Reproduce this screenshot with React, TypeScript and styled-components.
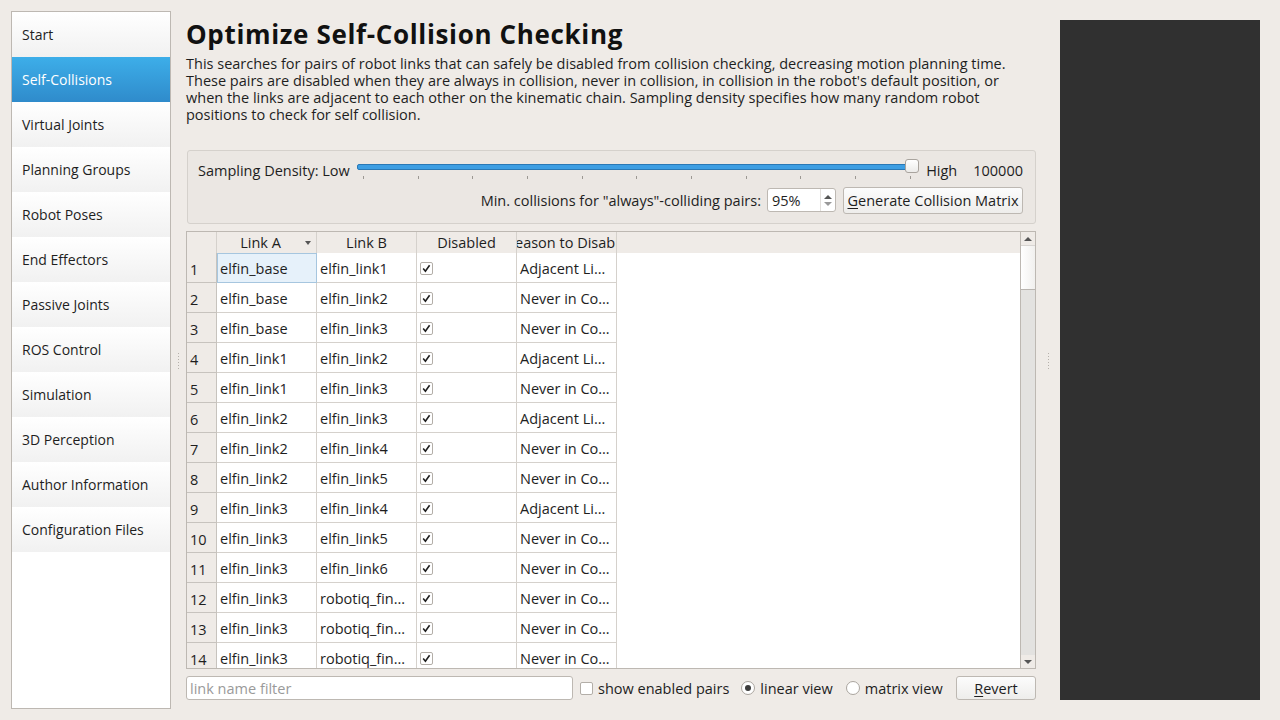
import React from "react";
import styled, { createGlobalStyle, css } from "styled-components";

const FONT = `"Open Sans", "Noto Sans", sans-serif`;

const GlobalStyle = createGlobalStyle`
  html, body { margin: 0; padding: 0; }
  body {
    background: #efebe7;
    font-family: ${FONT};
    font-size: 14.5px;
    color: #1e1e1e;
    width: 1280px;
    height: 720px;
    overflow: hidden;
  }
`;

const Window = styled.div`
  display: flex;
  width: 1280px;
  height: 720px;
  box-sizing: border-box;
  padding: 11px 0 11px 11px;
`;

const Sidebar = styled.nav`
  width: 160px;
  height: 698px;
  box-sizing: border-box;
  border: 1px solid #bdb8b2;
  background: #ffffff;
  display: flex;
  flex-direction: column;
`;

const NavItem = styled.div<{ $active?: boolean }>`
  height: 45px;
  flex: none;
  display: flex;
  align-items: center;
  padding-left: 10px;
  box-sizing: border-box;
  background: linear-gradient(#ffffff, #f1f1f1);
  color: #1e1e1e;
  font-size: 14px;
  ${(p) =>
    p.$active &&
    css`
      background: linear-gradient(#3daee9, #2f8bcb);
      color: #ffffff;
    `}
`;

const Splitter = styled.div<{ $w: number }>`
  width: ${(p) => p.$w}px;
  flex: none;
  display: flex;
  align-items: center;
  justify-content: center;
`;

const Grip = styled.div`
  width: 1px;
  height: 18px;
  margin-top: 4px;
  background-image: linear-gradient(#b5b0aa 50%, transparent 50%);
  background-size: 1px 3px;
`;

const Main = styled.main`
  width: 850px;
  flex: none;
  display: flex;
  flex-direction: column;
`;

const Title = styled.h1`
  margin: 8px 0 0 0;
  font-size: 26px;
  line-height: 30px;
  font-weight: 700;
  color: #111;
  letter-spacing: 0.65px;
  white-space: nowrap;
`;

const Description = styled.p`
  margin: 6px 0 0 0;
  line-height: 17px;
  white-space: nowrap;
  color: #1e1e1e;
`;

const GroupBox = styled.section`
  margin-top: 27px;
  margin-left: 1px;
  height: 74px;
  box-sizing: border-box;
  border: 1px solid #d5d1cc;
  border-radius: 3px;
  background: #ebe7e3;
  padding: 6px 12px 0 10px;
  display: flex;
  flex-direction: column;
`;

const SliderRow = styled.div`
  display: flex;
  align-items: center;
  height: 26px;
`;

const SliderTrack = styled.div`
  position: relative;
  flex: 1;
  height: 26px;
  margin: 0 7px 0 7px;
`;

const Groove = styled.div`
  position: absolute;
  left: 0;
  right: 6px;
  top: 7px;
  height: 4px;
  border-radius: 2px;
  background: #3d9ee3;
  border: 1px solid #2a78b5;
`;

const Handle = styled.div`
  position: absolute;
  right: 0;
  top: 2px;
  width: 12px;
  height: 12px;
  border-radius: 3px;
  border: 1px solid #a9a49e;
  background: linear-gradient(#ffffff, #ecebe9);
`;

const Tick = styled.div`
  position: absolute;
  top: 19px;
  width: 1px;
  height: 3px;
  background: #9c9893;
`;

const ValueLabel = styled.span`
  margin-left: 16px;
`;

const ControlRow = styled.div`
  display: flex;
  align-items: center;
  justify-content: flex-end;
  height: 30px;
  margin-top: 2px;
  gap: 6px;
`;

const SpinBox = styled.div`
  width: 69px;
  height: 24px;
  box-sizing: border-box;
  border: 1px solid #bdb8b2;
  border-radius: 3px;
  background: #fff;
  display: flex;
  align-items: center;
  padding-left: 4px;
  margin-right: 1px;
`;

const SpinText = styled.span`
  flex: 1;
`;

const SpinArrows = styled.div`
  width: 14px;
  height: 100%;
  display: flex;
  flex-direction: column;
  align-items: center;
  justify-content: center;
  gap: 3px;
  border-left: 1px solid #e2dfdc;
`;

const Arrow = styled.div<{ $down?: boolean; $color?: string }>`
  width: 0;
  height: 0;
  border-left: 4px solid transparent;
  border-right: 4px solid transparent;
  ${(p) =>
    p.$down
      ? css`border-top: 4px solid ${p.$color || "#666"};`
      : css`border-bottom: 4px solid ${p.$color || "#666"};`}
`;

const Button = styled.button<{ $w?: number; $h?: number }>`
  font-family: ${FONT};
  font-size: 14.5px;
  color: #1e1e1e;
  width: ${(p) => p.$w ?? 80}px;
  height: ${(p) => p.$h ?? 24}px;
  padding: 0;
  border: 1px solid #bdb8b2;
  border-radius: 3px;
  background: linear-gradient(#fcfcfc, #eeedeb);
  display: flex;
  align-items: center;
  justify-content: center;
  white-space: nowrap;
  cursor: default;
`;

const U = styled.span`
  text-decoration: underline;
  text-underline-offset: 2px;
`;

const TableFrame = styled.div`
  margin-top: 7px;
  height: 438px;
  box-sizing: border-box;
  border: 1px solid #bdb8b2;
  background: #fff;
  display: flex;
  overflow: hidden;
`;

const TableBody = styled.div`
  flex: 1;
  display: flex;
  flex-direction: column;
  overflow: hidden;
`;

const HeaderRow = styled.div`
  display: flex;
  height: 21px;
  flex: none;
  background: #efebe7;
`;

const HeaderCell = styled.div<{ $w: number; $sorted?: boolean }>`
  width: ${(p) => p.$w}px;
  flex: none;
  box-sizing: border-box;
  border-right: 1px solid #d5d1cc;
  display: flex;
  align-items: center;
  justify-content: center;
  overflow: hidden;
  white-space: nowrap;
  position: relative;
  padding-right: ${(p) => (p.$sorted ? 12 : 0)}px;
`;

const SortArrow = styled.div`
  position: absolute;
  right: 5px;
  top: 9px;
  width: 0;
  height: 0;
  border-left: 3.5px solid transparent;
  border-right: 3.5px solid transparent;
  border-top: 4px solid #555;
`;

const Row = styled.div`
  display: flex;
  height: 30px;
  flex: none;
`;

const RowHead = styled.div`
  width: 30px;
  flex: none;
  box-sizing: border-box;
  background: #efebe7;
  border-right: 1px solid #c7c3be;
  border-bottom: 1px solid #c7c3be;
  display: flex;
  align-items: center;
  padding: 3px 0 0 3px;
`;

const Cell = styled.div<{ $current?: boolean }>`
  width: 100px;
  flex: none;
  box-sizing: border-box;
  border-right: 1px solid #d5d1cc;
  border-bottom: 1px solid #d5d1cc;
  display: flex;
  align-items: center;
  padding: 1px 0 0 3px;
  overflow: hidden;
  white-space: nowrap;
  ${(p) =>
    p.$current &&
    css`
      background: #e6f1fa;
      border: 1px solid #a6c6df;
      padding-left: 2px;
    `}
`;

const CheckBox = styled.span`
  width: 13px;
  height: 13px;
  box-sizing: border-box;
  border: 1px solid #b3aea8;
  border-radius: 2px;
  background: #fff;
  display: inline-flex;
  align-items: center;
  justify-content: center;
  flex: none;
`;

const ScrollBar = styled.div`
  width: 14px;
  flex: none;
  border-left: 1px solid #bdb8b2;
  display: flex;
  flex-direction: column;
  background: #e3e2e0;
`;

const ScrollBtn = styled.div`
  height: 13px;
  flex: none;
  background: #efebe7;
  display: flex;
  align-items: center;
  justify-content: center;
`;

const ScrollHandle = styled.div`
  height: 43px;
  flex: none;
  background: linear-gradient(90deg, #ffffff, #f1f0ee);
  border-top: 1px solid #d8d5d2;
  border-bottom: 1px solid #b9b5b0;
`;

const ScrollTrough = styled.div`
  flex: 1;
`;

const BottomRow = styled.div`
  display: flex;
  align-items: center;
  height: 24px;
  margin-top: 7px;
`;

const FilterInput = styled.input`
  width: 387px;
  height: 24px;
  box-sizing: border-box;
  border: 1px solid #bdb8b2;
  border-radius: 3px;
  background: #fff;
  font-family: ${FONT};
  font-size: 14.5px;
  padding: 0 0 0 3px;
  outline: none;
  &::placeholder { color: #9a9a9a; }
`;

const Option = styled.label<{ $ml: number }>`
  display: flex;
  align-items: center;
  gap: 5px;
  margin-left: ${(p) => p.$ml}px;
  white-space: nowrap;
`;

const Radio = styled.span<{ $on?: boolean }>`
  width: 14px;
  height: 14px;
  box-sizing: border-box;
  border-radius: 50%;
  border: 1px solid #aaa59f;
  background: #fff;
  display: inline-flex;
  align-items: center;
  justify-content: center;
  &::after {
    content: "";
    width: 6px;
    height: 6px;
    border-radius: 50%;
    background: ${(p) => (p.$on ? "#3c3c3c" : "transparent")};
  }
`;

const Spacer = styled.div`
  flex: 1;
`;

const RightPanel = styled.div`
  width: 200px;
  height: 680px;
  margin-top: 9px;
  background: #303030;
  flex: none;
`;

const Check = () => (
  <svg width="11" height="11" viewBox="0 0 11 11">
    <path d="M2.2 5.6 L4.4 8.2 L8.6 2.2" fill="none" stroke="#1e1e1e" strokeWidth="1.6" />
  </svg>
);

const navItems = [
  "Start",
  "Self-Collisions",
  "Virtual Joints",
  "Planning Groups",
  "Robot Poses",
  "End Effectors",
  "Passive Joints",
  "ROS Control",
  "Simulation",
  "3D Perception",
  "Author Information",
  "Configuration Files",
];

const rows: [string, string, string][] = [
  ["elfin_base", "elfin_link1", "Adjacent Li…"],
  ["elfin_base", "elfin_link2", "Never in Co…"],
  ["elfin_base", "elfin_link3", "Never in Co…"],
  ["elfin_link1", "elfin_link2", "Adjacent Li…"],
  ["elfin_link1", "elfin_link3", "Never in Co…"],
  ["elfin_link2", "elfin_link3", "Adjacent Li…"],
  ["elfin_link2", "elfin_link4", "Never in Co…"],
  ["elfin_link2", "elfin_link5", "Never in Co…"],
  ["elfin_link3", "elfin_link4", "Adjacent Li…"],
  ["elfin_link3", "elfin_link5", "Never in Co…"],
  ["elfin_link3", "elfin_link6", "Never in Co…"],
  ["elfin_link3", "robotiq_fin…", "Never in Co…"],
  ["elfin_link3", "robotiq_fin…", "Never in Co…"],
  ["elfin_link3", "robotiq_fin…", "Never in Co…"],
];

const ticks = Array.from({ length: 11 }, (_, i) => 6 + i * 54.7);

export default function App() {
  return (
    <>
      <GlobalStyle />
      <Window>
        <Sidebar>
          {navItems.map((n) => (
            <NavItem key={n} $active={n === "Self-Collisions"}>
              {n}
            </NavItem>
          ))}
        </Sidebar>
        <Splitter $w={15}>
          <Grip />
        </Splitter>
        <Main>
          <Title>Optimize Self-Collision Checking</Title>
          <Description>
            This searches for pairs of robot links that can safely be disabled from collision checking, decreasing
            motion planning time.
            <br />
            These pairs are disabled when they are always in collision, never in collision, in collision in the robot's
            default position, or
            <br />
            when the links are adjacent to each other on the kinematic chain. Sampling density specifies how many random
            robot
            <br />
            positions to check for self collision.
          </Description>
          <GroupBox>
            <SliderRow>
              <span>Sampling Density: Low</span>
              <SliderTrack>
                <Groove />
                {ticks.map((t, i) => (
                  <Tick key={i} style={{ left: t }} />
                ))}
                <Handle />
              </SliderTrack>
              <span>High</span>
              <ValueLabel>100000</ValueLabel>
            </SliderRow>
            <ControlRow>
              <span>Min. collisions for "always"-colliding pairs:</span>
              <SpinBox>
                <SpinText>95%</SpinText>
                <SpinArrows>
                  <Arrow $color="#555" />
                  <Arrow $down $color="#999" />
                </SpinArrows>
              </SpinBox>
              <Button $w={180} $h={27}>
                <U>G</U>enerate Collision Matrix
              </Button>
            </ControlRow>
          </GroupBox>
          <TableFrame>
            <TableBody>
              <HeaderRow>
                <HeaderCell $w={30} />
                <HeaderCell $w={100} $sorted>
                  Link A
                  <SortArrow />
                </HeaderCell>
                <HeaderCell $w={100}>Link B</HeaderCell>
                <HeaderCell $w={100}>Disabled</HeaderCell>
                <HeaderCell $w={100}>Reason to Disable</HeaderCell>
              </HeaderRow>
              {rows.map((r, i) => (
                <Row key={i}>
                  <RowHead>{i + 1}</RowHead>
                  <Cell $current={i === 0}>{r[0]}</Cell>
                  <Cell>{r[1]}</Cell>
                  <Cell>
                    <CheckBox>
                      <Check />
                    </CheckBox>
                  </Cell>
                  <Cell>{r[2]}</Cell>
                </Row>
              ))}
            </TableBody>
            <ScrollBar>
              <ScrollBtn>
                <Arrow $color="#555" />
              </ScrollBtn>
              <ScrollHandle />
              <ScrollTrough />
              <ScrollBtn>
                <Arrow $down $color="#555" />
              </ScrollBtn>
            </ScrollBar>
          </TableFrame>
          <BottomRow>
            <FilterInput placeholder="link name filter" />
            <Option $ml={7}>
              <CheckBox />
              show enabled pairs
            </Option>
            <Option $ml={12}>
              <Radio $on />
              linear view
            </Option>
            <Option $ml={13}>
              <Radio />
              matrix view
            </Option>
            <Spacer />
            <Button $w={80} $h={24}>
              <U>R</U>evert
            </Button>
          </BottomRow>
        </Main>
        <Splitter $w={24}>
          <Grip />
        </Splitter>
        <RightPanel />
      </Window>
    </>
  );
}
